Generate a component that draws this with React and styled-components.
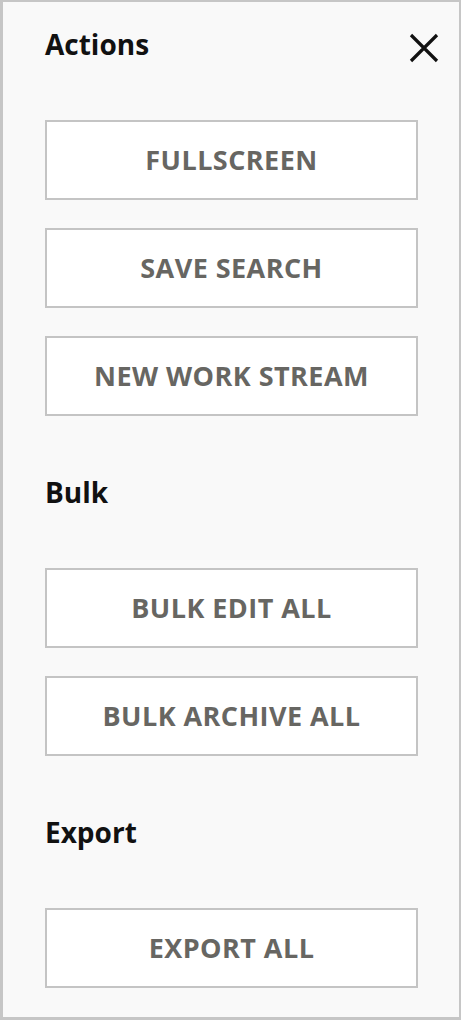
import React from 'react';
import styled, { createGlobalStyle } from 'styled-components';

const GlobalStyle = createGlobalStyle`
    html, body {
        margin: 0;
        padding: 0;
        background: #f9f9f9;
    }
    * {
        box-sizing: border-box;
    }
`;

const Panel = styled.div`
    width: 461px;
    min-height: 1020px;
    border: 2px solid #c6c6c6;
    border-left-width: 3px;
    border-bottom-width: 3px;
    background: #f9f9f9;
    padding: 22px 20px 28px 42px;
    font-family: "Open Sans", "Noto Sans", sans-serif;
    display: flex;
    flex-direction: column;
`;

const Section = styled.section`
    display: flex;
    flex-direction: column;
    margin-top: ${props => (props.first ? '0' : '56px')};
`;

const HeaderRow = styled.div`
    display: flex;
    justify-content: space-between;
    align-items: flex-start;
`;

const Heading = styled.h2`
    margin: 0;
    font-size: 28px;
    line-height: 40px;
    font-weight: 700;
    color: #111;
`;

const CloseButton = styled.button`
    border: 0;
    padding: 0;
    margin-top: 9px;
    background: none;
    width: 30px;
    height: 30px;
    cursor: pointer;
    display: flex;
    svg {
        display: block;
    }
`;

const ButtonStack = styled.div`
    display: flex;
    flex-direction: column;
    gap: 28px;
    margin-top: 56px;
    margin-right: 21px;
`;

const ActionButton = styled.button`
    height: 80px;
    width: 100%;
    padding: 0 0 2px;
    border: 2px solid #c4c4c4;
    background: #fff;
    font-family: "Open Sans", "Noto Sans", sans-serif;
    font-size: 27px;
    font-weight: 700;
    color: #676662;
    text-transform: uppercase;
    letter-spacing: 0.45px;
    cursor: pointer;
`;

const sections = [
    { title: 'Actions', buttons: ['Fullscreen', 'Save Search', 'New Work Stream'] },
    { title: 'Bulk', buttons: ['Bulk Edit All', 'Bulk Archive All'] },
    { title: 'Export', buttons: ['Export All'] },
];

function CloseIcon() {
    return (
        <svg width="30" height="30" viewBox="0 0 30 30">
            <path d="M2 2 L28 28 M28 2 L2 28" stroke="#111" strokeWidth="3.2" fill="none" />
        </svg>
    );
}

export default function App() {
    return (
        <>
            <GlobalStyle />
            <Panel>
                {sections.map((section, i) => (
                    <Section key={section.title} first={i === 0}>
                        <HeaderRow>
                            <Heading>{section.title}</Heading>
                            {i === 0 && (
                                <CloseButton aria-label="Close">
                                    <CloseIcon />
                                </CloseButton>
                            )}
                        </HeaderRow>
                        <ButtonStack>
                            {section.buttons.map(label => (
                                <ActionButton key={label}>{label}</ActionButton>
                            ))}
                        </ButtonStack>
                    </Section>
                ))}
            </Panel>
        </>
    );
}
